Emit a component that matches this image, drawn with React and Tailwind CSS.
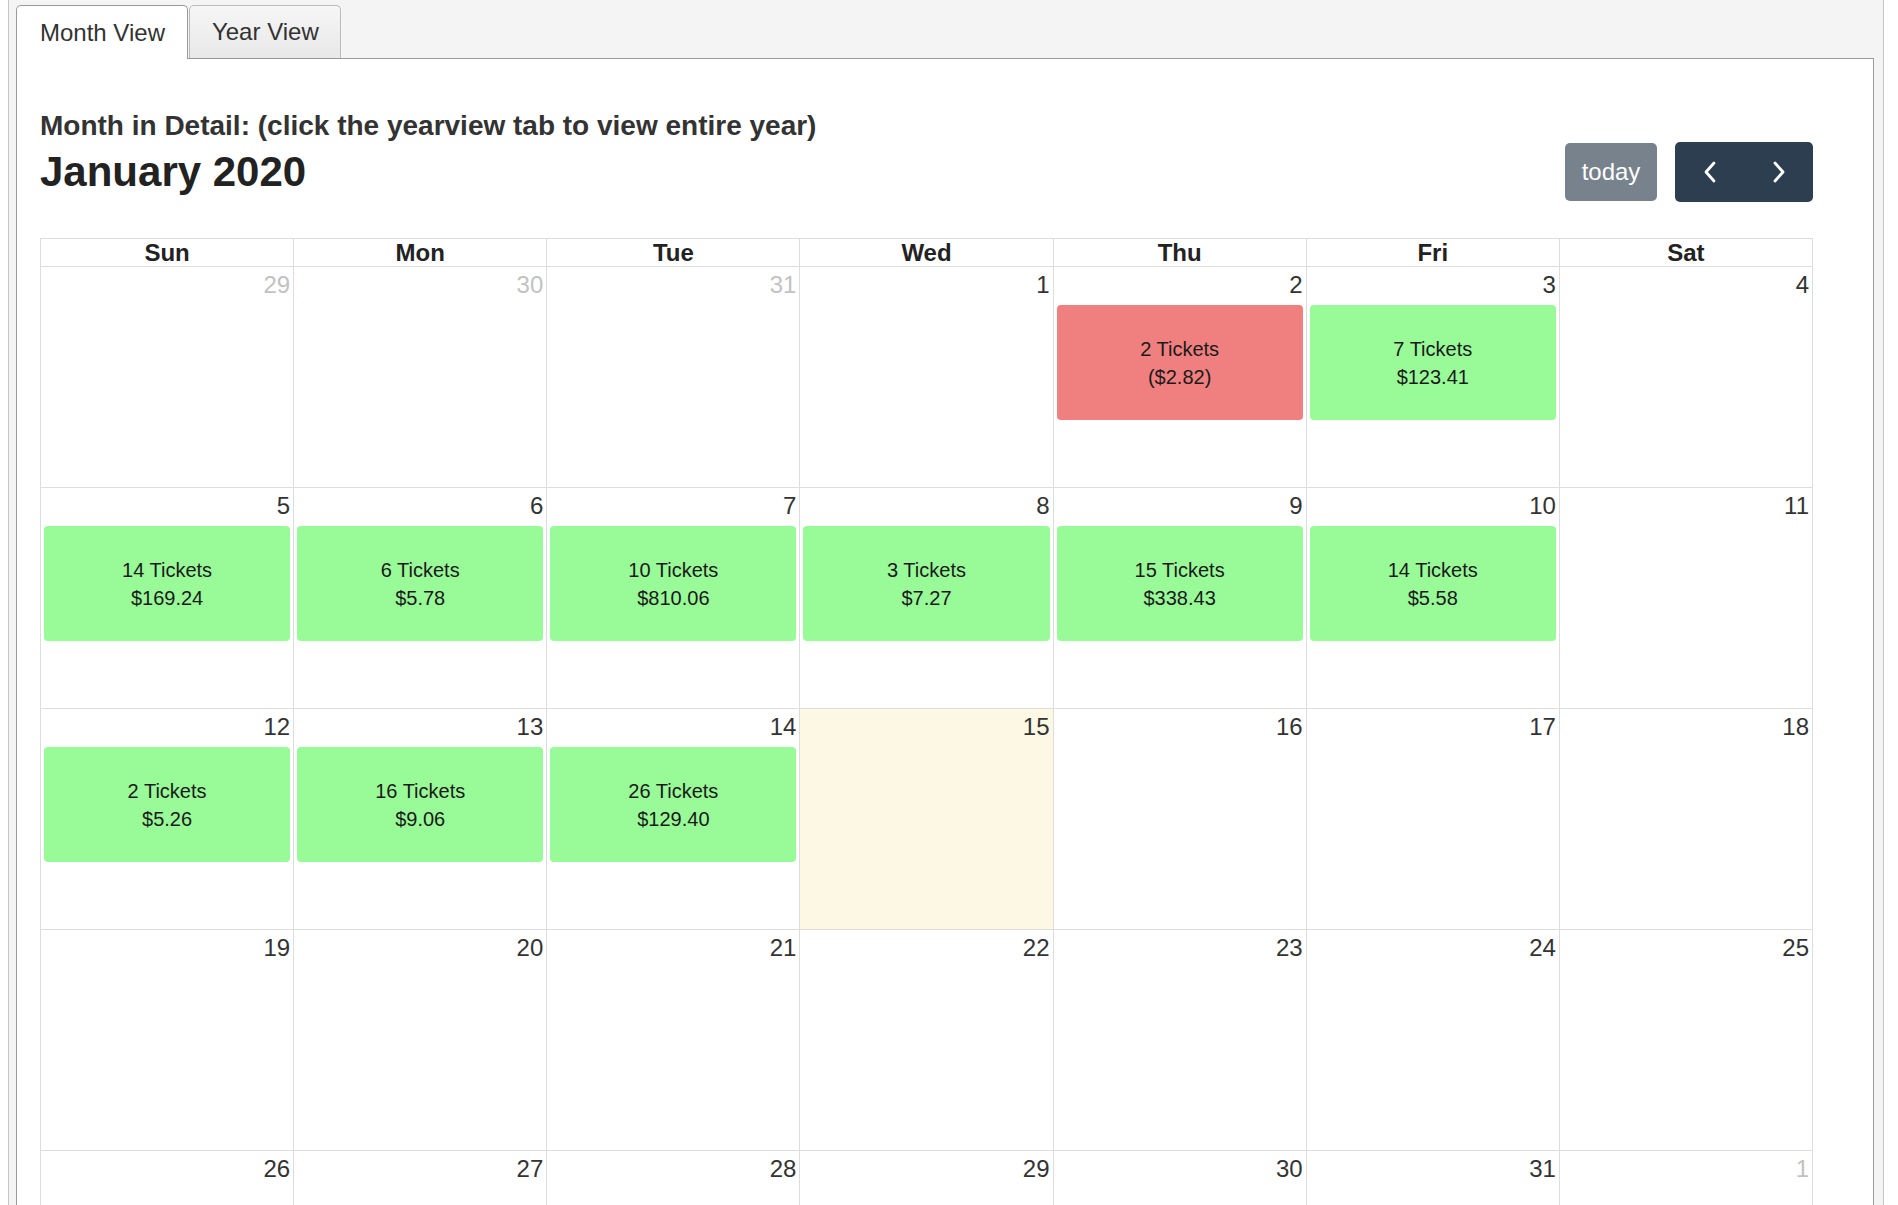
import React from 'react';

const weeks = [
  [
    { d: 29, other: true },
    { d: 30, other: true },
    { d: 31, other: true },
    { d: 1 },
    { d: 2, ev: ['2 Tickets', '($2.82)'], red: true },
    { d: 3, ev: ['7 Tickets', '$123.41'] },
    { d: 4 },
  ],
  [
    { d: 5, ev: ['14 Tickets', '$169.24'] },
    { d: 6, ev: ['6 Tickets', '$5.78'] },
    { d: 7, ev: ['10 Tickets', '$810.06'] },
    { d: 8, ev: ['3 Tickets', '$7.27'] },
    { d: 9, ev: ['15 Tickets', '$338.43'] },
    { d: 10, ev: ['14 Tickets', '$5.58'] },
    { d: 11 },
  ],
  [
    { d: 12, ev: ['2 Tickets', '$5.26'] },
    { d: 13, ev: ['16 Tickets', '$9.06'] },
    { d: 14, ev: ['26 Tickets', '$129.40'] },
    { d: 15, today: true },
    { d: 16 },
    { d: 17 },
    { d: 18 },
  ],
  [19, 20, 21, 22, 23, 24, 25].map((d) => ({ d })),
  [
    { d: 26 },
    { d: 27 },
    { d: 28 },
    { d: 29 },
    { d: 30 },
    { d: 31 },
    { d: 1, other: true },
  ],
];

const days = ['Sun', 'Mon', 'Tue', 'Wed', 'Thu', 'Fri', 'Sat'];

const Chevron = ({ left }) => (
  <svg width="14" height="22" viewBox="0 0 14 22" fill="none">
    <polyline
      points={left ? '11,2 3,11 11,20' : '3,2 11,11 3,20'}
      stroke="white"
      strokeWidth="2.8"
      strokeLinecap="round"
      strokeLinejoin="round"
    />
  </svg>
);

const DayCell = ({ cell }) => (
  <div className={`h-[221px] border-r border-b border-[#ddd] ${cell.today ? 'bg-[#fcf8e3]' : 'bg-white'}`}>
    <div className={`pt-[4px] pr-[3px] text-right text-[24px] leading-[27px] ${cell.other ? 'text-[#c2c2c2]' : 'text-[#333]'}`}>
      {cell.d}
    </div>
    {cell.ev && (
      <div
        className={`mx-[3px] mt-[7px] h-[115px] rounded-[4px] flex flex-col items-center justify-center text-[20px] leading-[28px] text-[#1a1a1a] ${cell.red ? 'bg-[#f08080]' : 'bg-[#98fb98]'}`}
      >
        <span>{cell.ev[0]}</span>
        <span>{cell.ev[1]}</span>
      </div>
    )}
  </div>
);

export default function App() {
  return (
    <div className="h-screen overflow-hidden bg-white font-['Liberation_Sans',Arial,sans-serif] text-[#333]">
      <div className="ml-[8px] w-[1876px] h-full border-x border-[#c5c5c5] bg-[#f4f4f4] pl-[7px] pr-[9px] pt-[5px]">
        {/* Tabs */}
        <div className="flex items-end gap-[1px] relative z-10">
          <div className="h-[54px] -mb-px flex items-center pl-[23px] pr-[22px] bg-white border border-b-0 border-[#9a9a9a] rounded-t-[5px] text-[24px] text-[#333]">
            Month View
          </div>
          <div className="h-[53px] flex items-center pl-[22px] pr-[21px] bg-gradient-to-b from-[#f6f6f6] to-[#e8e8e8] border border-b-0 border-[#bbb] rounded-t-[5px] text-[24px] text-[#333]">
            Year View
          </div>
        </div>

        {/* Panel */}
        <div className="h-[1200px] border border-[#9a9a9a] bg-white pl-[23px] pt-[51px]">
          <div className="w-[1773px]">
            <div className="text-[28px] leading-[32px] font-bold text-[#333]">
              Month in Detail: (click the yearview tab to view entire year)
            </div>

            <div className="flex items-center justify-between h-[60px] mb-[36px]">
              <h2 className="text-[42px] leading-[48px] font-bold text-[#222]">January 2020</h2>
              <div className="flex items-center gap-[18px]">
                <button className="w-[92px] h-[58px] rounded-[5px] bg-[#78828c] text-white text-[24px] leading-none">
                  today
                </button>
                <div className="flex h-[60px] rounded-[5px] bg-[#2c3e50] overflow-hidden">
                  <button className="w-[69px] flex items-center justify-center">
                    <Chevron left />
                  </button>
                  <button className="w-[69px] flex items-center justify-center">
                    <Chevron />
                  </button>
                </div>
              </div>
            </div>

            {/* Calendar */}
            <div className="border-l border-t border-[#ddd]">
              <div className="grid grid-cols-7">
                {days.map((d) => (
                  <div
                    key={d}
                    className="h-[28px] border-r border-b border-[#ddd] text-center text-[24px] leading-[28px] font-bold text-[#222]"
                  >
                    {d}
                  </div>
                ))}
              </div>
              {weeks.map((week, i) => (
                <div key={i} className="grid grid-cols-7">
                  {week.map((cell, j) => (
                    <DayCell key={j} cell={cell} />
                  ))}
                </div>
              ))}
            </div>
          </div>
        </div>
      </div>
    </div>
  );
}
